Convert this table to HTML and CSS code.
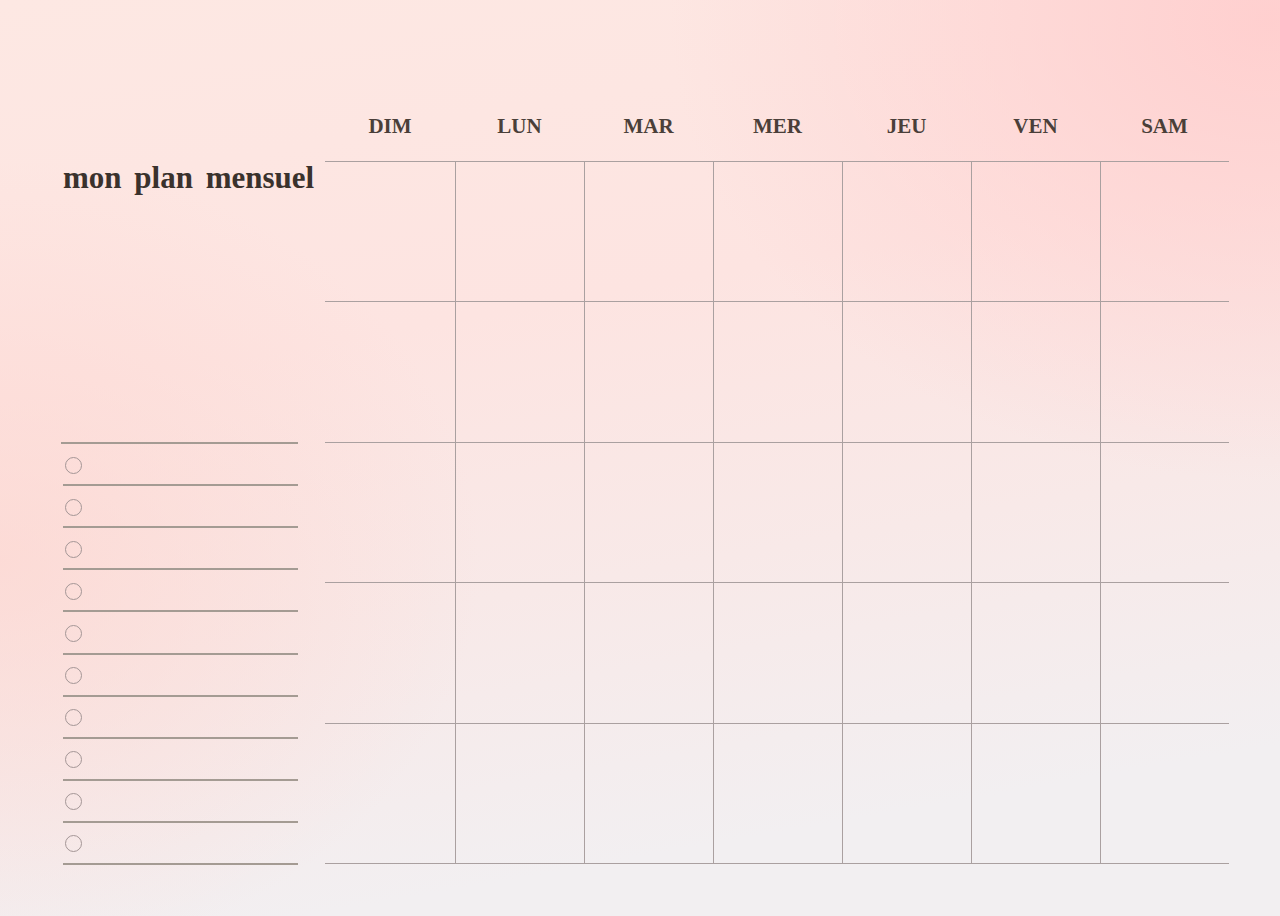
FILE: index.html
```html
<!DOCTYPE html>
<html lang="fr">
<head>
<meta charset="utf-8">
<title>mon plan mensuel</title>
<link rel="stylesheet" href="styles.css">
</head>
<body>
<main class="page">
  <aside class="sidebar">
    <h1 class="title">mon plan mensuel</h1>
    <ul class="checklist">
      <li class="check"><span class="dot"></span></li>
      <li class="check"><span class="dot"></span></li>
      <li class="check"><span class="dot"></span></li>
      <li class="check"><span class="dot"></span></li>
      <li class="check"><span class="dot"></span></li>
      <li class="check"><span class="dot"></span></li>
      <li class="check"><span class="dot"></span></li>
      <li class="check"><span class="dot"></span></li>
      <li class="check"><span class="dot"></span></li>
      <li class="check"><span class="dot"></span></li>
    </ul>
  </aside>
  <section class="calendar">
    <div class="days">
      <div class="day">DIM</div>
      <div class="day">LUN</div>
      <div class="day">MAR</div>
      <div class="day">MER</div>
      <div class="day">JEU</div>
      <div class="day">VEN</div>
      <div class="day">SAM</div>
    </div>
    <div class="grid">
      <div class="cell"></div><div class="cell"></div><div class="cell"></div><div class="cell"></div><div class="cell"></div><div class="cell"></div><div class="cell"></div>
      <div class="cell"></div><div class="cell"></div><div class="cell"></div><div class="cell"></div><div class="cell"></div><div class="cell"></div><div class="cell"></div>
      <div class="cell"></div><div class="cell"></div><div class="cell"></div><div class="cell"></div><div class="cell"></div><div class="cell"></div><div class="cell"></div>
      <div class="cell"></div><div class="cell"></div><div class="cell"></div><div class="cell"></div><div class="cell"></div><div class="cell"></div><div class="cell"></div>
      <div class="cell"></div><div class="cell"></div><div class="cell"></div><div class="cell"></div><div class="cell"></div><div class="cell"></div><div class="cell"></div>
    </div>
  </section>
</main>
</body>
</html>
```
FILE: styles.css
```css
* { box-sizing: border-box; }
html, body { margin: 0; padding: 0; }
body {
  width: 1280px;
  height: 916px;
  overflow: hidden;
  font-family: "Liberation Serif", "DejaVu Serif", serif;
  background:
    radial-gradient(ellipse 600px 460px at 1270px 20px, rgba(255, 205, 205, 0.9), rgba(255, 205, 205, 0) 100%),
    radial-gradient(ellipse 480px 400px at 0px 560px, rgba(253, 214, 208, 0.7), rgba(253, 214, 208, 0) 100%),
    linear-gradient(170deg, #fde8e3 0%, #fde4e1 35%, #f8e9e8 60%, #f2eff1 85%, #f2eff1 100%);
}
.page {
  display: flex;
  gap: 27px;
  padding: 90px 0 0 61px;
  height: 916px;
}
.sidebar {
  width: 237px;
  display: flex;
  flex-direction: column;
  height: 775px;
}
.title {
  margin: 70px 0 0 2px;
  font-size: 31px;
  line-height: 36px;
  font-weight: bold;
  color: #3a322d;
  white-space: nowrap;
  word-spacing: 5px;
}
.checklist {
  list-style: none;
  margin: auto 0 0 0;
  padding: 0;
  border-top: 2px solid #a49b93;
}
.check {
  height: 42.1px;
  margin-left: 2px;
  border-bottom: 2px solid #a49b93;
  display: flex;
  align-items: center;
  padding: 2px 0 0 2px;
}
.dot {
  width: 17px;
  height: 17px;
  border-radius: 50%;
  border: 1.3px solid #a49696;
}
.calendar {
  width: 904px;
  display: flex;
  flex-direction: column;
}
.days {
  display: grid;
  grid-template-columns: 130px repeat(6, 129px);
  height: 71px;
  align-items: center;
}
.day {
  text-align: center;
  font-size: 21px;
  font-weight: bold;
  color: #4a3f39;
  padding-top: 1px;
}
.grid {
  display: grid;
  grid-template-columns: 130px repeat(6, 129px);
  grid-template-rows: repeat(5, 140.4px);
  border-bottom: 1px solid #aaa0a0;
}
.cell {
  border-top: 1px solid #aaa0a0;
  border-left: 1px solid #aaa0a0;
}
.cell:nth-child(7n+1) { border-left: none; }
```
